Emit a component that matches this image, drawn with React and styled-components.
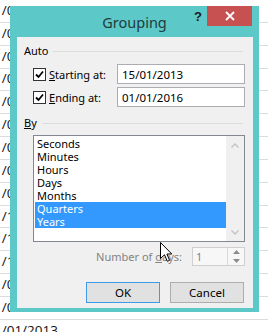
import React from "react";
import styled, { createGlobalStyle } from "styled-components";

const Global = createGlobalStyle`
  html, body { margin: 0; padding: 0; background: #fff; }
  #root { width: 268px; height: 332px; overflow: hidden; }
`;

const Page = styled.div`
  position: relative;
  width: 268px;
  height: 332px;
  overflow: hidden;
  background: #fff;
`;

const Sheet = styled.div`
  display: flex;
  flex-direction: column;
`;

const SheetRow = styled.div`
  height: 22.85px;
  box-sizing: border-box;
  border-bottom: 1px solid #dadcdd;
  padding-bottom: 2px;
  display: flex;
  align-items: center;
  font-family: "Open Sans", "Noto Sans", sans-serif;
  font-size: 13.5px;
  color: #111;
  white-space: nowrap;
  overflow: hidden;
`;

const CellText = styled.span`
  margin-left: -6px;
`;

const Window = styled.div`
  position: absolute;
  left: 10px;
  top: 6px;
  width: 249px;
  height: 306px;
  background: #5cc8c8;
  display: flex;
  flex-direction: column;
  box-sizing: border-box;
  font-family: "Noto Sans", "Open Sans", sans-serif;
`;

const TitleBar = styled.div`
  height: 31px;
  display: grid;
  grid-template-columns: 1fr;
  grid-template-rows: 31px;
`;

const Title = styled.div`
  grid-area: 1 / 1;
  justify-self: center;
  align-self: start;
  margin-top: 6px;
  font-size: 14.5px;
  line-height: 20px;
  color: #213c3c;
`;

const Controls = styled.div`
  grid-area: 1 / 1;
  justify-self: end;
  align-self: start;
  display: flex;
  align-items: flex-start;
  gap: 4px;
  margin-right: 7px;
`;

const Help = styled.div`
  width: 10px;
  margin-top: 3px;
  font-family: "Liberation Sans", Arial, sans-serif;
  font-weight: bold;
  font-size: 13px;
  line-height: 16px;
  color: #1a1a1a;
  text-align: center;
`;

const Close = styled.div`
  width: 45px;
  height: 20px;
  background: #c75050;
  display: flex;
  align-items: center;
  justify-content: center;
`;

const Client = styled.div`
  flex: 1;
  margin: 0 6px 4px 7px;
  background: #f0f0f0;
  padding: 7px 8px 0 7px;
  display: flex;
  flex-direction: column;
  font-size: 11px;
  color: #000;
`;

const Legend = styled.div`
  display: flex;
  align-items: center;
  height: 14px;
  line-height: 14px;
  margin-top: ${(p) => p.$top || 0}px;
`;

const LegendLine = styled.div`
  flex: 1;
  height: 1px;
  background: #dcdcdc;
  margin: 1px 2px 0 5px;
`;

const FieldRow = styled.div`
  display: grid;
  grid-template-columns: 84px 128px;
  align-items: center;
  height: 20px;
  margin-left: 9px;
  margin-top: ${(p) => p.$top}px;
`;

const CheckLabel = styled.label`
  display: flex;
  align-items: center;
  gap: 3px;
`;

const Box = styled.div`
  width: 13px;
  height: 13px;
  box-sizing: border-box;
  border: 1px solid #333;
  background: #fff;
  display: flex;
  align-items: center;
  justify-content: center;
`;

const TextBox = styled.div`
  height: 20px;
  box-sizing: border-box;
  border: 1px solid #abadb3;
  background: #fff;
  padding-left: 4px;
  display: flex;
  align-items: center;
  font-size: 11.5px;
`;

const ListBox = styled.div`
  margin-left: 9px;
  margin-top: 5px;
  width: 212px;
  height: 107px;
  box-sizing: border-box;
  border: 1px solid #828790;
  background: #fff;
  display: flex;
`;

const Items = styled.div`
  flex: 1;
  padding: 1px 0 0 1px;
  display: flex;
  flex-direction: column;
`;

const Item = styled.div`
  height: 13px;
  line-height: 13px;
  padding-left: 2px;
  background: ${(p) => (p.$selected ? "#3399ff" : "transparent")};
  color: ${(p) => (p.$selected ? "#fff" : "#000")};
`;

const ScrollBar = styled.div`
  width: 18px;
  background: #f0f0f0;
  display: flex;
  flex-direction: column;
  align-items: center;
  justify-content: space-between;
  padding: 7px 0 6px;
  box-sizing: border-box;
`;

const NumberRow = styled.div`
  display: flex;
  justify-content: flex-end;
  align-items: center;
  gap: 10px;
  height: 19px;
  margin-top: 5px;
  color: #838383;
`;

const Spin = styled.div`
  width: 53px;
  height: 19px;
  box-sizing: border-box;
  border: 1px solid #cfcfcf;
  background: #f7f7f7;
  display: flex;
`;

const SpinValue = styled.div`
  flex: 1;
  padding-left: 3px;
  line-height: 17px;
  color: #838383;
`;

const SpinButtons = styled.div`
  width: 16px;
  border-left: 1px solid #dadada;
  display: flex;
  flex-direction: column;
  align-items: center;
  justify-content: space-around;
`;

const ButtonRow = styled.div`
  display: flex;
  justify-content: flex-end;
  gap: 10px;
  margin-top: 16px;
  margin-right: 1px;
`;

const Button = styled.div`
  width: 74px;
  height: 21px;
  box-sizing: border-box;
  border: 1px solid ${(p) => (p.$default ? "#3c9ae8" : "#adadad")};
  background: #e1e1e1;
  display: flex;
  align-items: center;
  justify-content: center;
  font-size: 11.5px;
`;

const Cursor = styled.svg`
  position: absolute;
  left: 160px;
  top: 242px;
`;

const Check = () => (
  <svg width="9" height="9" viewBox="0 0 9 9">
    <path d="M1 4.5 L3.5 7 L8 1.5" fill="none" stroke="#000" strokeWidth="1.8" />
  </svg>
);

const Chevron = ({ up }) => (
  <svg width="8" height="5" viewBox="0 0 8 5">
    <path d={up ? "M0.5 4.5 L4 1 L7.5 4.5" : "M0.5 0.5 L4 4 L7.5 0.5"} fill="none" stroke="#c2c2c2" strokeWidth="1.3" />
  </svg>
);

const Tri = ({ up }) => (
  <svg width="7" height="4" viewBox="0 0 7 4">
    <path d={up ? "M0 4 L3.5 0 L7 4 Z" : "M0 0 L3.5 4 L7 0 Z"} fill="#8a8a8a" />
  </svg>
);

const rows = ["0", "0", "0", "0", "0", "0", "0", "0", "0", "1", "1", "1", "0", "0", "0"];

export default function App() {
  return (
    <Page>
      <Global />
      <Sheet>
        {rows.map((d, i) => (
          <SheetRow key={i}>
            <CellText>{`1/${d}1/2013`}</CellText>
          </SheetRow>
        ))}
      </Sheet>
      <Window>
        <TitleBar>
          <Title>Grouping</Title>
          <Controls>
            <Help>?</Help>
            <Close>
              <svg width="10" height="10" viewBox="0 0 10 10">
                <path d="M1 1 L9 9 M9 1 L1 9" stroke="#fff" strokeWidth="1.8" />
              </svg>
            </Close>
          </Controls>
        </TitleBar>
        <Client>
          <Legend>
            Auto
            <LegendLine />
          </Legend>
          <FieldRow $top={6}>
            <CheckLabel>
              <Box><Check /></Box>
              <span><u>S</u>tarting at:</span>
            </CheckLabel>
            <TextBox>15/01/2013</TextBox>
          </FieldRow>
          <FieldRow $top={3}>
            <CheckLabel>
              <Box><Check /></Box>
              <span><u>E</u>nding at:</span>
            </CheckLabel>
            <TextBox>01/01/2016</TextBox>
          </FieldRow>
          <Legend $top={9}>
            <span><u>B</u>y</span>
            <LegendLine />
          </Legend>
          <ListBox>
            <Items>
              <Item>Seconds</Item>
              <Item>Minutes</Item>
              <Item>Hours</Item>
              <Item>Days</Item>
              <Item>Months</Item>
              <Item $selected>Quarters</Item>
              <Item $selected>Years</Item>
            </Items>
            <ScrollBar>
              <Chevron up />
              <Chevron />
            </ScrollBar>
          </ListBox>
          <NumberRow>
            <span>Number of <u>d</u>ays:</span>
            <Spin>
              <SpinValue>1</SpinValue>
              <SpinButtons>
                <Tri up />
                <Tri />
              </SpinButtons>
            </Spin>
          </NumberRow>
          <ButtonRow>
            <Button $default>OK</Button>
            <Button>Cancel</Button>
          </ButtonRow>
        </Client>
      </Window>
      <Cursor width="13" height="21" viewBox="0 0 13 21">
        <path d="M0.5 0.5 L0.5 16.5 L4.5 12.8 L7.3 19.3 L9.6 18.3 L6.9 12 L11.8 12 Z" fill="#fff" stroke="#000" strokeWidth="1" />
      </Cursor>
    </Page>
  );
}
